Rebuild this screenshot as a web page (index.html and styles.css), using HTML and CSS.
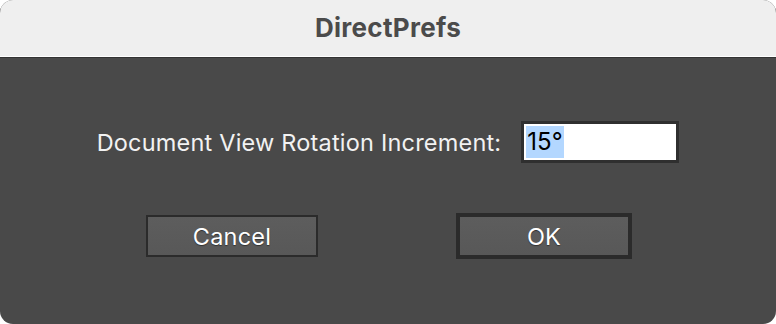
FILE: index.html
```html
<!DOCTYPE html>
<html>
<head>
<meta charset="utf-8">
<link rel="stylesheet" href="styles.css">
</head>
<body>
<div class="window">
  <div class="titlebar">DirectPrefs</div>
  <div class="content">
    <div class="field-row">
      <span class="label">Document View Rotation Increment:</span>
      <div class="textbox"><span class="sel">15°</span></div>
    </div>
    <div class="button-row">
      <div class="btn">Cancel</div>
      <div class="btn btn-default">OK</div>
    </div>
  </div>
</div>
</body>
</html>
```

FILE: styles.css
```css
html, body {
  margin: 0;
  padding: 0;
  background: #ffffff;
}
body {
  font-family: Inter, "Liberation Sans", sans-serif;
}
.window {
  width: 776px;
  height: 324px;
  border-radius: 13px;
  overflow: hidden;
  display: flex;
  flex-direction: column;
  background: #494949;
}
.titlebar {
  height: 55px;
  flex: none;
  background: #efefef;
  border-bottom: 1px solid #ffffff;
  box-shadow: 0 1px 0 #333333;
  display: flex;
  align-items: center;
  justify-content: center;
  font-weight: 700;
  font-size: 26px;
  letter-spacing: 0.3px;
  color: #4b4b4b;
  padding-bottom: 1px;
  box-sizing: content-box;
}
.content {
  flex: 1;
  display: flex;
  flex-direction: column;
  align-items: center;
  padding-top: 64px;
  padding-left: 2px;
}
.field-row {
  display: flex;
  align-items: center;
  gap: 20px;
  margin-left: -2px;
}
.label {
  color: #f2f2f2;
  font-size: 23.5px;
  letter-spacing: 0.2px;
}
.textbox {
  width: 150px;
  height: 36px;
  border: 3px solid #2f2f2f;
  background: #ffffff;
  display: flex;
  align-items: center;
  padding-left: 2px;
}
.sel {
  background: #b3d7ff;
  color: #000000;
  font-size: 24px;
  line-height: 32px;
  padding: 0 1px 0 1px;
}
.button-row {
  margin-top: 50px;
  display: flex;
  align-items: center;
  gap: 138px;
}
.btn {
  width: 168px;
  height: 38px;
  border: 2px solid #2b2b2b;
  background: linear-gradient(#5d5d5d, #585858);
  color: #ffffff;
  font-size: 23.5px;
  letter-spacing: 0.2px;
  display: flex;
  align-items: center;
  justify-content: center;
  text-shadow: 0 1px 1px rgba(0,0,0,0.45);
}
.btn-default {
  border-width: 4px;
}
```
